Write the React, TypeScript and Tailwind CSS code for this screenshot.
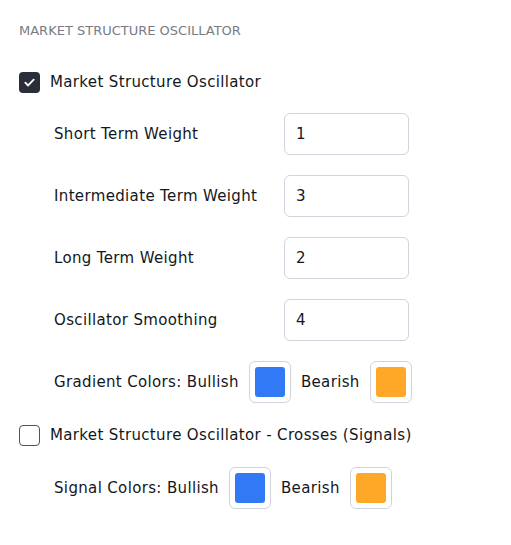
import { useState } from 'react';

const font = { fontFamily: '"DejaVu Sans", "Open Sans", sans-serif' };

function CheckBox({ checked, onChange }: { checked: boolean; onChange: () => void }) {
  return (
    <button
      onClick={onChange}
      className={
        checked
          ? 'w-[21px] h-[21px] rounded-[4px] bg-[#2a2e39] flex items-center justify-center shrink-0'
          : 'w-[21px] h-[21px] rounded-[4px] border border-[#50535e] bg-white shrink-0'
      }
    >
      {checked && (
        <svg width="13" height="13" viewBox="0 0 14 14" fill="none">
          <path d="M2.5 7.2l3 3 6-6.2" stroke="white" strokeWidth="2" strokeLinecap="round" strokeLinejoin="round" />
        </svg>
      )}
    </button>
  );
}

function Swatch({ color }: { color: string }) {
  return (
    <div className="w-[42px] h-[42px] rounded-[6px] border border-[#d1d4dc] flex items-center justify-center shrink-0">
      <div className={`w-[30px] h-[30px] rounded-[3px] ${color}`} />
    </div>
  );
}

function NumberRow({ label, value }: { label: string; value: string }) {
  const [v, setV] = useState(value);
  return (
    <div className="flex items-center h-[42px]">
      <span className="w-[230px]">{label}</span>
      <input
        value={v}
        onChange={(e) => setV(e.target.value)}
        style={font}
        className="w-[125px] h-[42px] rounded-[6px] border border-[#d1d4dc] px-[11px] text-[15px] tracking-[0.35px] text-[#131722] outline-none"
      />
    </div>
  );
}

export default function App() {
  const [mso, setMso] = useState(true);
  const [crosses, setCrosses] = useState(false);

  return (
    <div className="w-[511px] h-[545px] bg-white px-[19px] text-[15px] tracking-[0.35px] text-[#131722]" style={font}>
      <div className="h-[61px] flex items-center text-[13px] tracking-normal uppercase text-[#787b86]">
        Market Structure Oscillator
      </div>

      {/* Oscillator */}
      <div className="h-[42px] flex items-center gap-[10px]">
        <CheckBox checked={mso} onChange={() => setMso(!mso)} />
        <span>Market Structure Oscillator</span>
      </div>

      <div className="pl-[35px] mt-[10px] flex flex-col gap-[20px]">
        <NumberRow label="Short Term Weight" value="1" />
        <NumberRow label="Intermediate Term Weight" value="3" />
        <NumberRow label="Long Term Weight" value="2" />
        <NumberRow label="Oscillator Smoothing" value="4" />
        <div className="h-[42px] flex items-center gap-[10px]">
          <span>Gradient Colors: Bullish</span>
          <Swatch color="bg-[#3179f5]" />
          <span>Bearish</span>
          <Swatch color="bg-[#ffa726]" />
        </div>
      </div>

      {/* Crosses */}
      <div className="h-[42px] mt-[11px] flex items-center gap-[10px]">
        <CheckBox checked={crosses} onChange={() => setCrosses(!crosses)} />
        <span>Market Structure Oscillator - Crosses (Signals)</span>
      </div>

      <div className="pl-[35px] mt-[11px] h-[42px] flex items-center gap-[10px]">
        <span>Signal Colors: Bullish</span>
        <Swatch color="bg-[#3179f5]" />
        <span>Bearish</span>
        <Swatch color="bg-[#ffa726]" />
      </div>
    </div>
  );
}
